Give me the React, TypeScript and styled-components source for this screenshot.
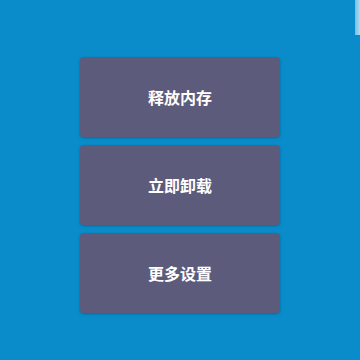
import React from "react";
import styled, { createGlobalStyle } from "styled-components";

const Global = createGlobalStyle`
  html, body { margin: 0; padding: 0; background: #0a8ccb; }
  body { font-family: "Noto Sans CJK SC", "Noto Sans", sans-serif; }
`;

const Page = styled.div`
  position: relative;
  width: 360px;
  height: 360px;
  background: #0a8ccb;
  display: flex;
  flex-direction: column;
  align-items: center;
  padding-top: 57px;
  box-sizing: border-box;
  gap: 8px;
  overflow: hidden;
`;

const ActionButton = styled.button`
  width: 200px;
  height: 80px;
  border: none;
  border-radius: 4px;
  background: #5d5b7b;
  color: #ffffff;
  font-family: "Noto Sans CJK SC", "Noto Sans", sans-serif;
  font-size: 16px;
  font-weight: 700;
  letter-spacing: 0;
  box-shadow: 0 1px 3px rgba(0, 0, 0, 0.25);
  cursor: pointer;
  padding: 0;
`;

const ScrollHint = styled.div`
  position: absolute;
  top: 0;
  right: 0;
  width: 5px;
  height: 35px;
  background: linear-gradient(to right, rgba(200, 235, 250, 0.55), rgba(215, 240, 252, 0.8));
`;

const labels = ["释放内存", "立即卸载", "更多设置"];

export default function App() {
  return (
    <>
      <Global />
      <Page>
        {labels.map((l) => (
          <ActionButton key={l}>{l}</ActionButton>
        ))}
        <ScrollHint />
      </Page>
    </>
  );
}
